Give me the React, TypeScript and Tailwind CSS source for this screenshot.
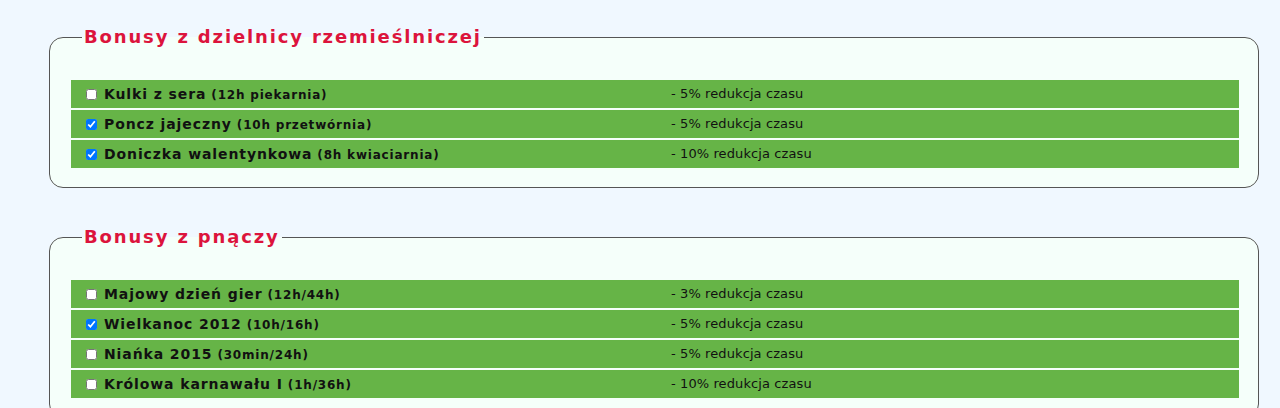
import React from 'react';

type Bonus = {
  name: string;
  note: string;
  effect: string;
  checked: boolean;
};

type Group = {
  title: string;
  items: Bonus[];
};

const GROUPS: Group[] = [
  {
    title: 'Bonusy z dzielnicy rzemieślniczej',
    items: [
      { name: 'Kulki z sera', note: '(12h piekarnia)', effect: '- 5% redukcja czasu', checked: false },
      { name: 'Poncz jajeczny', note: '(10h przetwórnia)', effect: '- 5% redukcja czasu', checked: true },
      { name: 'Doniczka walentynkowa', note: '(8h kwiaciarnia)', effect: '- 10% redukcja czasu', checked: true },
    ],
  },
  {
    title: 'Bonusy z pnączy',
    items: [
      { name: 'Majowy dzień gier', note: '(12h/44h)', effect: '- 3% redukcja czasu', checked: false },
      { name: 'Wielkanoc 2012', note: '(10h/16h)', effect: '- 5% redukcja czasu', checked: true },
      { name: 'Niańka 2015', note: '(30min/24h)', effect: '- 5% redukcja czasu', checked: false },
      { name: 'Królowa karnawału I', note: '(1h/36h)', effect: '- 10% redukcja czasu', checked: false },
    ],
  },
];

export default function App() {
  return (
    <div className="min-h-screen bg-[#f0f8ff] font-['DejaVu_Sans',Verdana,sans-serif] text-[#111] pt-[26px] pb-10 pl-[49px] pr-[21px] flex flex-col gap-[38px]">
      {GROUPS.map((g) => (
        <BonusGroup key={g.title} group={g} />
      ))}
    </div>
  );
}

function BonusGroup({ group }: { group: Group }) {
  const [state, setState] = React.useState(group.items.map((i) => i.checked));

  return (
    <fieldset className="border border-[#555] rounded-[14px] bg-[#f5fffa] pl-[21px] pr-[19px] pt-[32px] pb-[19px]">
      <legend className="ml-[11px] px-[2px] text-[18px] leading-[22px] font-bold tracking-[1.85px] text-[#dc143c]">
        {group.title}
      </legend>
      <div className="flex flex-col gap-[2px]">
        {group.items.map((it, i) => (
          <div key={it.name} className="grid grid-cols-[600px_1fr] items-center h-[28px] bg-[#66b447]">
            <label className="flex items-center pl-[15px] gap-[7px]">
              <input
                type="checkbox"
                checked={state[i]}
                onChange={() => setState((s) => s.map((v, j) => (j === i ? !v : v)))}
                className="w-[11px] h-[11px]"
              />
              <span className="text-[14px] font-bold tracking-[0.9px]">
                {it.name}
                <span className="ml-[5px] text-[12px] tracking-[0.8px]">{it.note}</span>
              </span>
            </label>
            <span className="text-[13px] tracking-[0.1px]">{it.effect}</span>
          </div>
        ))}
      </div>
    </fieldset>
  );
}
